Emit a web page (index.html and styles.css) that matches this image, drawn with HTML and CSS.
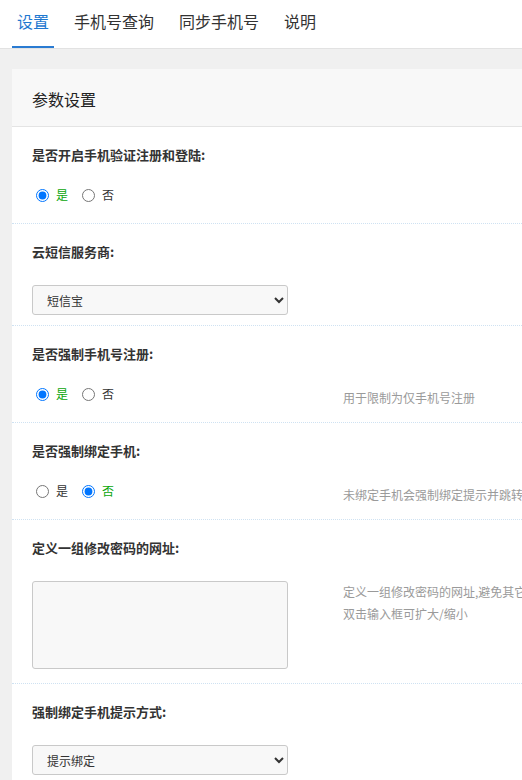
FILE: index.html
```html
<!DOCTYPE html>
<html lang="zh-CN">
<head>
<meta charset="utf-8">
<title>设置</title>
<link rel="stylesheet" href="styles.css">
</head>
<body>
<div class="page">
  <div class="tabbar">
    <div class="tab active">设置</div>
    <div class="tab">手机号查询</div>
    <div class="tab">同步手机号</div>
    <div class="tab">说明</div>
  </div>
  <div class="main">
    <div class="card">
      <div class="card-header">参数设置</div>
      <div class="row">
        <div class="label">是否开启手机验证注册和登陆:</div>
        <div class="line line-radio">
          <div class="control radios">
            <label class="opt"><input type="radio" name="r1" checked><span class="on">是</span></label>
            <label class="opt"><input type="radio" name="r1"><span>否</span></label>
          </div>
        </div>
      </div>
      <div class="row row-select">
        <div class="label">云短信服务商:</div>
        <div class="line line-select">
          <div class="control">
            <select class="sel"><option>短信宝</option></select>
          </div>
        </div>
      </div>
      <div class="row">
        <div class="label">是否强制手机号注册:</div>
        <div class="line line-radio">
          <div class="control radios">
            <label class="opt"><input type="radio" name="r3" checked><span class="on">是</span></label>
            <label class="opt"><input type="radio" name="r3"><span>否</span></label>
          </div>
          <div class="help help-radio">用于限制为仅手机号注册</div>
        </div>
      </div>
      <div class="row">
        <div class="label">是否强制绑定手机:</div>
        <div class="line line-radio">
          <div class="control radios">
            <label class="opt"><input type="radio" name="r4"><span>是</span></label>
            <label class="opt"><input type="radio" name="r4" checked><span class="on">否</span></label>
          </div>
          <div class="help help-radio">未绑定手机会强制绑定提示并跳转到绑定页面</div>
        </div>
      </div>
      <div class="row row-text">
        <div class="label">定义一组修改密码的网址:</div>
        <div class="line line-select">
          <div class="control">
            <textarea class="ta"></textarea>
          </div>
          <div class="help">定义一组修改密码的网址,避免其它页面修改密码<br>双击输入框可扩大/缩小</div>
        </div>
      </div>
      <div class="row row-select">
        <div class="label">强制绑定手机提示方式:</div>
        <div class="line line-select">
          <div class="control">
            <select class="sel"><option>提示绑定</option></select>
          </div>
        </div>
      </div>
    </div>
  </div>
</div>
</body>
</html>
```
FILE: styles.css
```css
html, body {
  margin: 0;
  padding: 0;
  background: #f0f0f0;
  overflow: hidden;
}
body {
  font-family: "Noto Sans CJK SC", "Microsoft YaHei", sans-serif;
  color: #333;
}
.page {
  width: 522px;
  height: 780px;
  overflow: hidden;
}
.tabbar {
  display: flex;
  gap: 15px;
  padding-left: 12px;
  background: #fff;
  border-bottom: 1px solid #e2e2e2;
  height: 48px;
}
.tab {
  height: 46px;
  line-height: 42px;
  padding: 0 5px;
  font-size: 16px;
  color: #333;
  border-bottom: 2px solid transparent;
  white-space: nowrap;
}
.tab.active {
  color: #1e78d0;
  border-bottom-color: #2a7bd2;
}
.main {
  padding: 20px 0 0 12px;
}
.card {
  width: 640px;
  background: #fff;
}
.card-header {
  background: #f8f8f8;
  padding: 20px 20px 17px;
  line-height: 20px;
  font-size: 16px;
  color: #222;
  border-bottom: 1px solid #e4e4e4;
}
.row {
  padding: 18px 20px 18px;
  border-bottom: 1px dotted #cfe2f2;
}
.row-select {
  padding-bottom: 10px;
}
.row-text {
  padding-bottom: 14px;
}
.label {
  font-size: 13px;
  font-weight: bold;
  line-height: 20px;
  color: #333;
  white-space: nowrap;
}
.line {
  display: flex;
  align-items: flex-start;
  margin-top: 20px;
}
.line-radio {
  height: 20px;
}
.line-select {
  margin-top: 23px;
}
.control {
  width: 256px;
  flex: none;
}
.radios {
  display: flex;
  align-items: center;
  height: 20px;
}
.opt {
  display: flex;
  align-items: center;
  font-size: 12px;
  line-height: 20px;
  margin-right: 10px;
  color: #333;
}
.opt input {
  margin: 0 7px 0 4px;
  width: 13px;
  height: 13px;
}
.opt .on {
  color: #0aa50a;
}
.sel {
  display: block;
  width: 256px;
  height: 30px;
  font-family: inherit;
  font-size: 12px;
  color: #333;
  background: #f8f8f8;
  border: 1px solid #c9c9c9;
  border-radius: 3px;
  padding: 0 8px 0 10px;
}
.ta {
  display: block;
  box-sizing: border-box;
  width: 256px;
  height: 88px;
  background: #f8f8f8;
  border: 1px solid #c9c9c9;
  border-radius: 3px;
  resize: none;
  margin: 0;
}
.help {
  margin-left: 55px;
  font-size: 12px;
  line-height: 22px;
  color: #9a9a9a;
  white-space: nowrap;
}
.help-radio {
  margin-top: 3px;
}
```
